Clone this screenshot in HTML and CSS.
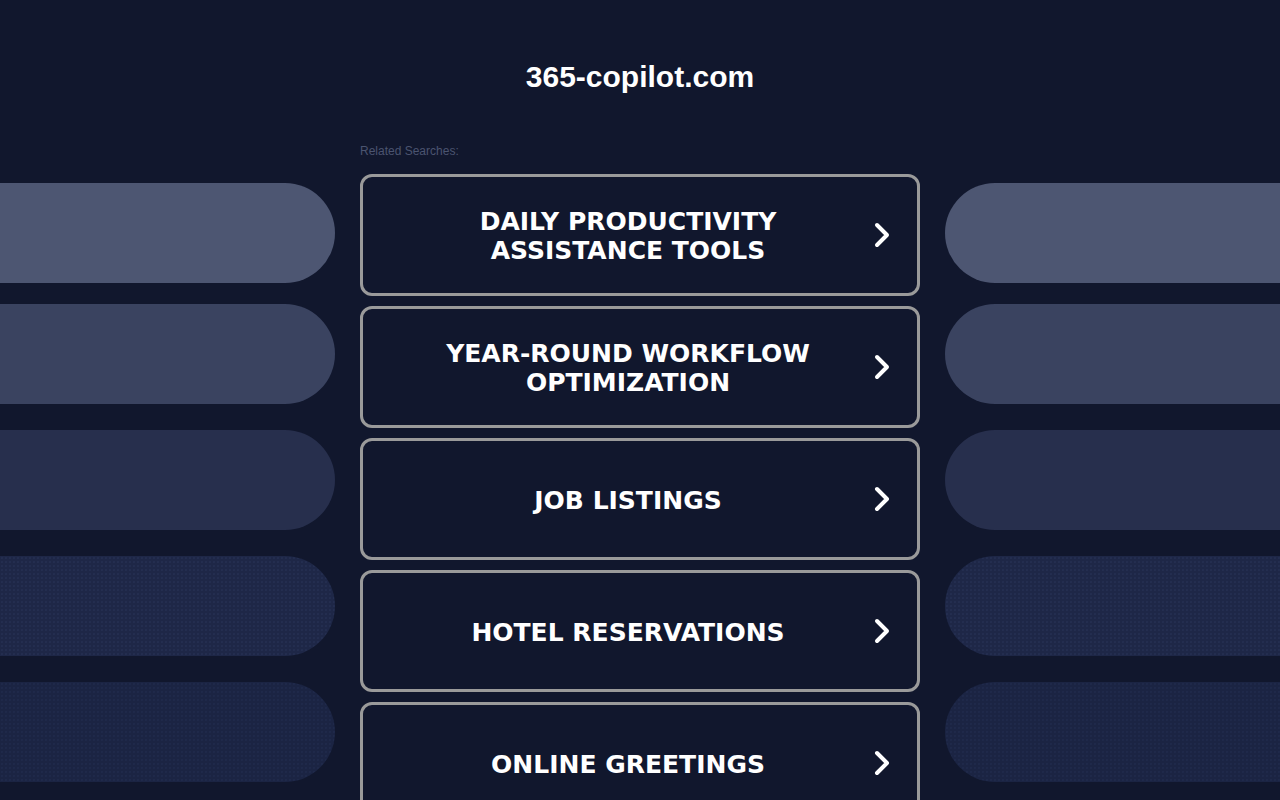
FILE: index.html
```html
<!DOCTYPE html>
<html lang="en">
<head>
<meta charset="utf-8">
<title>365-copilot.com</title>
<link rel="stylesheet" href="styles.css">
</head>
<body>
<header class="header">
  <h1 class="site-title">365-copilot.com</h1>
</header>
<main class="layout">
  <div class="side side-left">
    <div class="pill pill-1 pill-first"></div>
    <div class="pill pill-2"></div>
    <div class="pill pill-3"></div>
    <div class="pill pill-4"></div>
    <div class="pill pill-5"></div>
  </div>
  <section class="center">
    <p class="related">Related Searches:</p>
    <div class="links">
      <a class="link" href="#"><span class="link-text">DAILY PRODUCTIVITY<br>ASSISTANCE TOOLS</span><svg class="chev" viewBox="0 0 16 26" width="16" height="26"><polyline points="3,3 13,13 3,23"/></svg></a>
      <a class="link" href="#"><span class="link-text">YEAR-ROUND WORKFLOW<br>OPTIMIZATION</span><svg class="chev" viewBox="0 0 16 26" width="16" height="26"><polyline points="3,3 13,13 3,23"/></svg></a>
      <a class="link" href="#"><span class="link-text">JOB LISTINGS</span><svg class="chev" viewBox="0 0 16 26" width="16" height="26"><polyline points="3,3 13,13 3,23"/></svg></a>
      <a class="link" href="#"><span class="link-text">HOTEL RESERVATIONS</span><svg class="chev" viewBox="0 0 16 26" width="16" height="26"><polyline points="3,3 13,13 3,23"/></svg></a>
      <a class="link" href="#"><span class="link-text">ONLINE GREETINGS</span><svg class="chev" viewBox="0 0 16 26" width="16" height="26"><polyline points="3,3 13,13 3,23"/></svg></a>
    </div>
  </section>
  <div class="side side-right">
    <div class="pill pill-1 pill-first"></div>
    <div class="pill pill-2"></div>
    <div class="pill pill-3"></div>
    <div class="pill pill-4"></div>
    <div class="pill pill-5"></div>
  </div>
</main>
</body>
</html>
```
FILE: styles.css
```css
html, body {
  margin: 0;
  padding: 0;
}
body {
  background: #11172d;
  color: #ffffff;
  font-family: "Liberation Sans", Arial, sans-serif;
  overflow: hidden;
  height: 800px;
}
.header {
  padding-top: 59px;
  text-align: center;
}
.site-title {
  margin: 0;
  font-size: 30px;
  line-height: 36px;
  font-weight: bold;
  color: #ffffff;
}
.layout {
  display: grid;
  grid-template-columns: 335px 560px 335px;
  column-gap: 25px;
  margin-top: 48px;
}
.side {
  display: flex;
  flex-direction: column;
  gap: 26px;
  padding-top: 40px;
}
.pill {
  height: 100px;
  flex: none;
}
.pill-first {
  margin-bottom: -5px;
}
.side-left .pill {
  border-radius: 0 50px 50px 0;
}
.side-right .pill {
  border-radius: 50px 0 0 50px;
}
.pill-1 { background-color: #4d5672; }
.pill-2 { background-color: #3a4360; }
.pill-3 { background-color: #272f4d; }
.pill-4 {
  background-color: #1e2747;
  background-image: radial-gradient(circle, rgba(70, 85, 130, 0.18) 0.6px, transparent 1px);
  background-size: 4px 4px;
}
.pill-5 {
  background-color: #1b2443;
  background-image: radial-gradient(circle, rgba(60, 75, 120, 0.18) 0.6px, transparent 1px);
  background-size: 4px 4px;
}
.center {
  display: flex;
  flex-direction: column;
}
.related {
  margin: 1px 0 0;
  font-size: 12px;
  line-height: 14px;
  color: #4b5470;
}
.links {
  display: flex;
  flex-direction: column;
  gap: 10px;
  margin-top: 16px;
}
.link {
  position: relative;
  display: flex;
  align-items: center;
  justify-content: center;
  height: 122px;
  box-sizing: border-box;
  border: 3px solid #9a9a9a;
  border-radius: 12px;
  padding: 2px 24px 0 0;
  text-decoration: none;
  color: #ffffff;
}
.link-text {
  font-family: "DejaVu Sans", Verdana, sans-serif;
  font-weight: bold;
  font-size: 25px;
  line-height: 29px;
  text-align: center;
}
.chev {
  position: absolute;
  right: 27px;
  top: 50%;
  margin-top: -13px;
}
.chev polyline {
  fill: none;
  stroke: #ffffff;
  stroke-width: 4;
  stroke-linecap: round;
  stroke-linejoin: round;
}
```
